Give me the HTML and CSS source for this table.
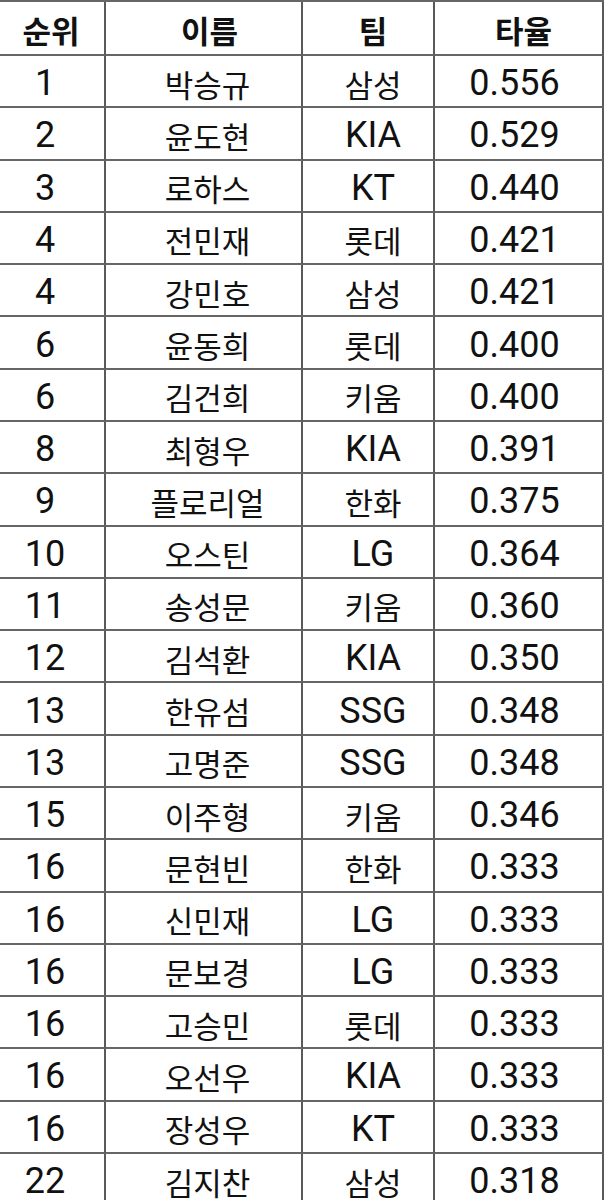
FILE: index.html
```html
<!DOCTYPE html>
<html lang="ko">
<head>
<meta charset="utf-8">
<link rel="stylesheet" href="styles.css">
</head>
<body>
<div class="table">
  <div class="row head">
    <div class="c c1"><span class="ko">순위</span></div>
    <div class="c c2"><span class="ko">이름</span></div>
    <div class="c c3"><span class="ko">팀</span></div>
    <div class="c c4"><span class="ko">타율</span></div>
  </div>
  <div class="row"><div class="c c1">1</div><div class="c c2"><span class="ko">박승규</span></div><div class="c c3"><span class="ko">삼성</span></div><div class="c c4">0.556</div></div>
  <div class="row"><div class="c c1">2</div><div class="c c2"><span class="ko">윤도현</span></div><div class="c c3">KIA</div><div class="c c4">0.529</div></div>
  <div class="row"><div class="c c1">3</div><div class="c c2"><span class="ko">로하스</span></div><div class="c c3">KT</div><div class="c c4">0.440</div></div>
  <div class="row"><div class="c c1">4</div><div class="c c2"><span class="ko">전민재</span></div><div class="c c3"><span class="ko">롯데</span></div><div class="c c4">0.421</div></div>
  <div class="row"><div class="c c1">4</div><div class="c c2"><span class="ko">강민호</span></div><div class="c c3"><span class="ko">삼성</span></div><div class="c c4">0.421</div></div>
  <div class="row"><div class="c c1">6</div><div class="c c2"><span class="ko">윤동희</span></div><div class="c c3"><span class="ko">롯데</span></div><div class="c c4">0.400</div></div>
  <div class="row"><div class="c c1">6</div><div class="c c2"><span class="ko">김건희</span></div><div class="c c3"><span class="ko">키움</span></div><div class="c c4">0.400</div></div>
  <div class="row"><div class="c c1">8</div><div class="c c2"><span class="ko">최형우</span></div><div class="c c3">KIA</div><div class="c c4">0.391</div></div>
  <div class="row"><div class="c c1">9</div><div class="c c2"><span class="ko">플로리얼</span></div><div class="c c3"><span class="ko">한화</span></div><div class="c c4">0.375</div></div>
  <div class="row"><div class="c c1">10</div><div class="c c2"><span class="ko">오스틴</span></div><div class="c c3">LG</div><div class="c c4">0.364</div></div>
  <div class="row"><div class="c c1">11</div><div class="c c2"><span class="ko">송성문</span></div><div class="c c3"><span class="ko">키움</span></div><div class="c c4">0.360</div></div>
  <div class="row"><div class="c c1">12</div><div class="c c2"><span class="ko">김석환</span></div><div class="c c3">KIA</div><div class="c c4">0.350</div></div>
  <div class="row"><div class="c c1">13</div><div class="c c2"><span class="ko">한유섬</span></div><div class="c c3">SSG</div><div class="c c4">0.348</div></div>
  <div class="row"><div class="c c1">13</div><div class="c c2"><span class="ko">고명준</span></div><div class="c c3">SSG</div><div class="c c4">0.348</div></div>
  <div class="row"><div class="c c1">15</div><div class="c c2"><span class="ko">이주형</span></div><div class="c c3"><span class="ko">키움</span></div><div class="c c4">0.346</div></div>
  <div class="row"><div class="c c1">16</div><div class="c c2"><span class="ko">문현빈</span></div><div class="c c3"><span class="ko">한화</span></div><div class="c c4">0.333</div></div>
  <div class="row"><div class="c c1">16</div><div class="c c2"><span class="ko">신민재</span></div><div class="c c3">LG</div><div class="c c4">0.333</div></div>
  <div class="row"><div class="c c1">16</div><div class="c c2"><span class="ko">문보경</span></div><div class="c c3">LG</div><div class="c c4">0.333</div></div>
  <div class="row"><div class="c c1">16</div><div class="c c2"><span class="ko">고승민</span></div><div class="c c3"><span class="ko">롯데</span></div><div class="c c4">0.333</div></div>
  <div class="row"><div class="c c1">16</div><div class="c c2"><span class="ko">오선우</span></div><div class="c c3">KIA</div><div class="c c4">0.333</div></div>
  <div class="row"><div class="c c1">16</div><div class="c c2"><span class="ko">장성우</span></div><div class="c c3">KT</div><div class="c c4">0.333</div></div>
  <div class="row"><div class="c c1">22</div><div class="c c2"><span class="ko">김지찬</span></div><div class="c c3"><span class="ko">삼성</span></div><div class="c c4">0.318</div></div>
</div>
</body>
</html>
```

FILE: styles.css
```css
html, body {
  margin: 0;
  padding: 0;
  background: #ffffff;
}

body {
  width: 606px;
  height: 1200px;
  overflow: hidden;
  font-family: "Roboto", "Noto Sans CJK KR", sans-serif;
  color: #111111;
}

.table {
  width: 604px;
  border-top: 2px solid #666666;
}

.row {
  display: grid;
  grid-template-columns: 106px 197px 132px 169px;
  height: 52.29px;
}

.row.head {
  height: 54px;
}

.c {
  display: flex;
  align-items: center;
  justify-content: center;
  border-right: 2px solid #5a5a5a;
  border-bottom: 2px solid #666666;
  font-size: 36px;
  line-height: 1;
  padding-top: 4px;
}

.head .c {
  padding-top: 2px;
}

.ko {
  font-family: "Noto Sans CJK KR", sans-serif;
  font-size: 31px;
  line-height: 1;
}

.head .ko {
  font-weight: 700;
}

.c1 { padding-right: 14px; }
.c2 { padding-left: 8px; }
.c3 { padding-left: 10px; }
.c4 { padding-right: 8px; }

.head .c1 { padding-right: 2px; }
.head .c2 { padding-left: 12px; }
.head .c3 { padding-left: 10px; }
.head .c4 { padding-left: 10px; padding-right: 0; }
```
